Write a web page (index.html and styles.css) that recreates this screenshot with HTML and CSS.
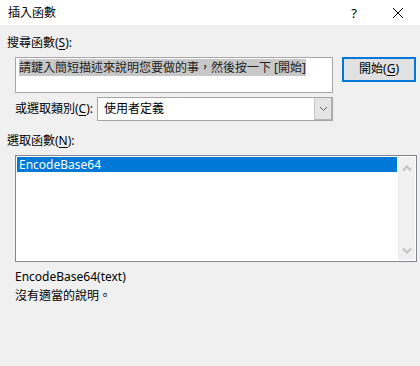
FILE: index.html
```html
<!DOCTYPE html>
<html lang="zh-Hant">
<head>
    <meta charset="utf-8">
    <link rel="stylesheet" href="styles.css">
</head>
<body>
<div class="dialog">
    <div class="titlebar">
        <span class="title">插入函數</span>
        <span class="help">?</span>
        <span class="close">
            <svg width="12" height="12" viewBox="0 0 12 12"><path d="M1 1L11 11M11 1L1 11" stroke="#000" stroke-width="1" fill="none"/></svg>
        </span>
    </div>
    <div class="content">
        <div class="label">搜尋函數(<u>S</u>):</div>
        <div class="search-row">
            <div class="search-box"><span class="sel">請鍵入簡短描述來說明您要做的事，然後按一下 [開始]</span></div>
            <div class="btn">開始(<u>G</u>)</div>
        </div>
        <div class="cat-row">
            <span class="cat-label">或選取類別(<u>C</u>):</span>
            <div class="combo">
                <span class="combo-text">使用者定義</span>
                <span class="combo-btn">
                    <svg width="9" height="6" viewBox="0 0 9 6"><path d="M1 1L4.5 4.5L8 1" stroke="#606060" stroke-width="1" fill="none"/></svg>
                </span>
            </div>
        </div>
        <div class="label label-list">選取函數(<u>N</u>):</div>
        <div class="listbox">
            <div class="items">
                <div class="item current">EncodeBase64</div>
            </div>
            <div class="scrollbar">
                <svg width="10" height="7" viewBox="0 0 10 7"><path d="M1 5.5L5 1.5L9 5.5" stroke="#c2c2c2" stroke-width="2" fill="none"/></svg>
                <svg width="10" height="7" viewBox="0 0 10 7"><path d="M1 1.5L5 5.5L9 1.5" stroke="#c2c2c2" stroke-width="2" fill="none"/></svg>
            </div>
        </div>
        <div class="desc">
            <div>EncodeBase64(text)</div>
            <div>沒有適當的說明。</div>
        </div>
    </div>
</div>
</body>
</html>
```

FILE: styles.css
```css
* {
    margin: 0;
    padding: 0;
    box-sizing: border-box;
}

body {
    width: 420px;
    height: 366px;
    background-color: #f0f0f0;
    font-family: "Noto Sans", "Noto Sans CJK TC", sans-serif;
    font-size: 12px;
    color: #000;
    overflow: hidden;
}

u {
    text-decoration: underline;
    text-underline-offset: 2px;
}

.titlebar {
    height: 25px;
    background-color: #fff;
    display: flex;
    align-items: center;
    padding-left: 8px;
}

.title {
    flex: 1;
    line-height: 16px;
}

.help {
    width: 12px;
    margin-right: 32px;
    font-size: 13px;
    text-align: center;
}

.close {
    width: 12px;
    height: 12px;
    margin-right: 16px;
    display: flex;
}

.content {
    padding: 10px 0 0 7px;
}

.label {
    line-height: 16px;
}

.search-row {
    display: flex;
    align-items: flex-start;
    margin: 6px 0 0 8px;
}

.search-box {
    width: 318px;
    height: 36px;
    background-color: #fff;
    border: 1px solid #a6a6a6;
    padding: 2px 0 0 3px;
    line-height: 16px;
}

.sel {
    background-color: #c8c8c8;
    color: #222;
}

.btn {
    width: 74px;
    height: 25px;
    margin-left: 9px;
    border: 2px solid #0078d7;
    background-color: #e1e1e1;
    text-align: center;
    line-height: 20px;
}

.cat-row {
    display: flex;
    align-items: center;
    margin: 4px 0 0 8px;
}

.cat-label {
    width: 82px;
    line-height: 16px;
}

.combo {
    width: 236px;
    height: 24px;
    display: flex;
    border: 1px solid #a6a6a6;
    background-color: #fff;
}

.combo-text {
    flex: 1;
    padding-left: 6px;
    line-height: 21px;
}

.combo-btn {
    width: 18px;
    background-color: #e5e5e5;
    border-left: 1px solid #c8c8c8;
    border-right: 1px solid #b4b4b4;
    border-bottom: 1px solid #b4b4b4;
    display: flex;
    align-items: center;
    justify-content: center;
}

.label-list {
    margin-top: 12px;
}

.listbox {
    width: 402px;
    height: 107px;
    margin: 6px 0 0 8px;
    border: 1px solid #828790;
    background-color: #fff;
    display: flex;
    padding: 1px 1px 1px 1px;
}

.items {
    flex: 1;
    padding-right: 1px;
}

.item {
    height: 15px;
    line-height: 15px;
    padding-left: 2px;
}

.item.current {
    background-color: #0078d7;
    color: #fff;
}

.scrollbar {
    width: 17px;
    background-color: #f0f0f0;
    display: flex;
    flex-direction: column;
    justify-content: space-between;
    align-items: center;
    padding: 8px 0 6px;
}

.desc {
    margin: 5px 0 0 8px;
    line-height: 19px;
}
```
